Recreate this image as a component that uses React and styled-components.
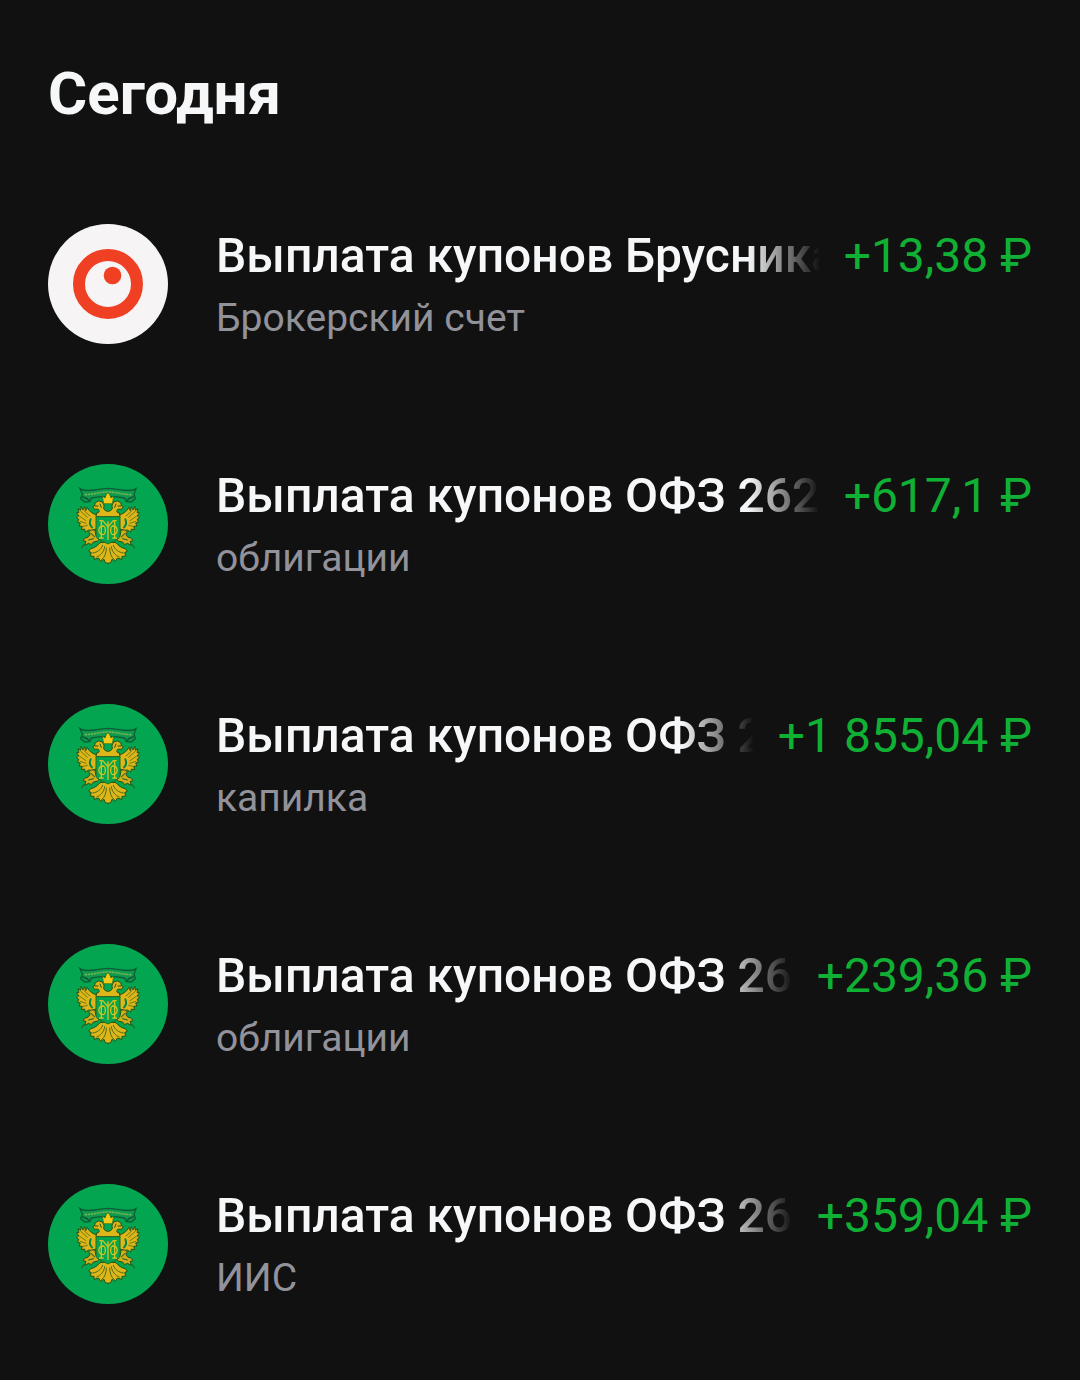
import styled, { createGlobalStyle } from "styled-components";

const GlobalStyle = createGlobalStyle`
  * {
    box-sizing: border-box;
  }

  body {
    margin: 0;
    background: #111111;
    color: #f6f7f8;
    font-family: Roboto, "Noto Sans", sans-serif;
  }
`;

const Page = styled.main`
  padding: 58px 48px 76px;
`;

const Title = styled.h1`
  margin: 0 0 94px;
  font-size: 60px;
  font-weight: 700;
  line-height: 72px;
`;

const List = styled.ul`
  display: flex;
  flex-direction: column;
  gap: 120px;
  margin: 0;
  padding: 0;
  list-style: none;
`;

const Row = styled.li`
  display: flex;
  align-items: center;
  gap: 48px;
`;

const Avatar = styled.div`
  flex: none;
  width: 120px;
  height: 120px;
  border-radius: 50%;
  overflow: hidden;
  background: ${(props) => props.$bg};

  svg {
    display: block;
    width: 100%;
    height: 100%;
  }
`;

const Info = styled.div`
  flex: 1;
  min-width: 0;
`;

const Line = styled.div`
  display: flex;
  gap: 24px;
  margin-bottom: 8px;
  font-size: 48px;
  line-height: 60px;
  white-space: nowrap;
`;

// long names fade out before the amount
const Name = styled.span`
  flex: 1;
  min-width: 0;
  overflow: hidden;
  font-weight: 500;
  mask-image: linear-gradient(to left, transparent, #000 72px);
`;

const Amount = styled.span`
  flex: none;
  color: #10b034;
`;

const Account = styled.div`
  font-size: 39px;
  line-height: 48px;
  color: #92929b;
`;

const BrusnikaLogo = () => (
  <svg viewBox="0 0 120 120" aria-hidden="true">
    <circle cx="60" cy="60" r="29" fill="none" stroke="#f04023" strokeWidth="12" />
    <circle cx="64.5" cy="51.5" r="8.8" fill="#f04023" />
  </svg>
);

// one half of the eagle, mirrored for the other side
const EagleHalf = () => (
  <g stroke="#2b5217" strokeWidth="3" strokeLinejoin="round" strokeLinecap="round">
    {/* wing */}
    <path
      d="M88 106 C76 102 68 96 62 90 L58 82 L53 92 L50 80 L45 90 L39 79 L38 91 L30 86 L33 98 L26 98 L32 108 L25 113 L33 118 L28 126 L37 129 L33 138 L43 139 L40 149 L50 147 L52 156 L62 150 L70 152 L86 146Z"
      fill="#deb61a"
    />
    <path
      d="M38 94 L58 112 M48 92 L66 108 M34 108 L54 122 M36 124 L54 130 M44 140 L58 136"
      fill="none"
      stroke="#6d7a16"
    />
    <path d="M68 118 C64 126 66 136 72 142" fill="none" stroke="#058545" strokeWidth="6" />
    {/* neck and head */}
    <path
      d="M120 110 L84 110 L86 98 C94 100 96 92 90 87 L80 88 L74 80 L80 76 L82 68 L92 63 L103 66 L108 76 L107 86 L112 92 L120 94"
      fill="#deb61a"
    />
    <path d="M80 78 L90 78 M96 72 L100 82" fill="none" />
    {/* claw with the sceptre */}
    <path
      d="M80 150 L68 150 L62 156 L66 164 L60 172 L52 174 L44 182 L54 184 L50 196 L62 190 L70 194 L76 186 L88 184 L94 178 L84 166Z"
      fill="#cfae1b"
    />
    <path d="M68 160 L80 170 M62 180 L76 176 M48 194 L40 204" fill="none" />
    {/* tail */}
    <path
      d="M120 186 L96 188 C90 196 80 204 68 206 L62 214 L70 218 L66 228 L78 229 L79 238 L92 234 L97 244 L108 238 L112 248 L120 250"
      fill="#deb61a"
    />
    <path
      d="M104 196 C98 210 88 217 74 219 M110 200 C108 216 98 226 86 231 M115 204 C115 220 110 232 101 239"
      fill="none"
      stroke="#4d6d18"
    />
  </g>
);

const EagleEmblem = () => (
  <svg viewBox="-60 -48 360 360" aria-hidden="true">
    <EagleHalf />
    <g transform="translate(240 0) scale(-1 1)">
      <EagleHalf />
    </g>
    <path d="M84 110 H156 V166 C156 178 138 182 120 192 C102 182 84 178 84 166Z" fill="#03a550" stroke="#2c6a1e" strokeWidth="3" />
    {/* monogram */}
    <g fill="none" stroke="#cfc322" strokeWidth="4">
      <path d="M94 122 H104 L120 140 L136 122 H146" />
      <path d="M100 122 V174 M140 122 V174 M93 174 H107 M133 174 H147 M120 124 V180" />
      <path d="M107 138 C88 138 88 164 107 164 C114 160 114 142 107 138Z" />
      <path d="M133 138 C152 138 152 164 133 164 C126 160 126 142 133 138Z" />
    </g>
    {/* ribbon */}
    <path
      d="M36 26 C54 38 82 27 120 25 C158 27 186 38 204 26 L198 42 L202 56 L190 66 L174 64 L170 54 C150 50 138 49 120 49 C102 49 90 50 70 54 L66 64 L50 66 L38 56 L43 42Z"
      fill="#0f9a50"
      stroke="#0c5c34"
      strokeWidth="4"
    />
    <path d="M43 50 L58 56 L66 64 M197 50 L182 56 L174 64" fill="none" stroke="#0c5c34" strokeWidth="5" />
    <path d="M50 44 C80 43 96 36 120 36 C144 36 160 43 190 44" fill="none" stroke="#72b24c" strokeWidth="5" strokeDasharray="7 2" />
    {/* crown */}
    <path
      d="M107 71 L103 48 L111 54 L115 44 L120 38 L125 44 L129 54 L137 48 L133 71Z"
      fill="#f2cb18"
      stroke="#2c6a1e"
      strokeWidth="2"
    />
  </svg>
);

const payments = [
  { name: "Выплата купонов Брусника", account: "Брокерский счет", amount: "+13,38 ₽", brusnika: true },
  { name: "Выплата купонов ОФЗ 262", account: "облигации", amount: "+617,1 ₽" },
  { name: "Выплата купонов ОФЗ 262", account: "капилка", amount: "+1 855,04 ₽" },
  { name: "Выплата купонов ОФЗ 262", account: "облигации", amount: "+239,36 ₽" },
  { name: "Выплата купонов ОФЗ 262", account: "ИИС", amount: "+359,04 ₽" },
];

export default function App() {
  return (
    <Page>
      <GlobalStyle />
      <Title>Сегодня</Title>
      <List>
        {payments.map((item, index) => (
          <Row key={index}>
            <Avatar $bg={item.brusnika ? "#f6f4f5" : "#03a550"}>
              {item.brusnika ? <BrusnikaLogo /> : <EagleEmblem />}
            </Avatar>
            <Info>
              <Line>
                <Name>{item.name}</Name>
                <Amount>{item.amount}</Amount>
              </Line>
              <Account>{item.account}</Account>
            </Info>
          </Row>
        ))}
      </List>
    </Page>
  );
}
